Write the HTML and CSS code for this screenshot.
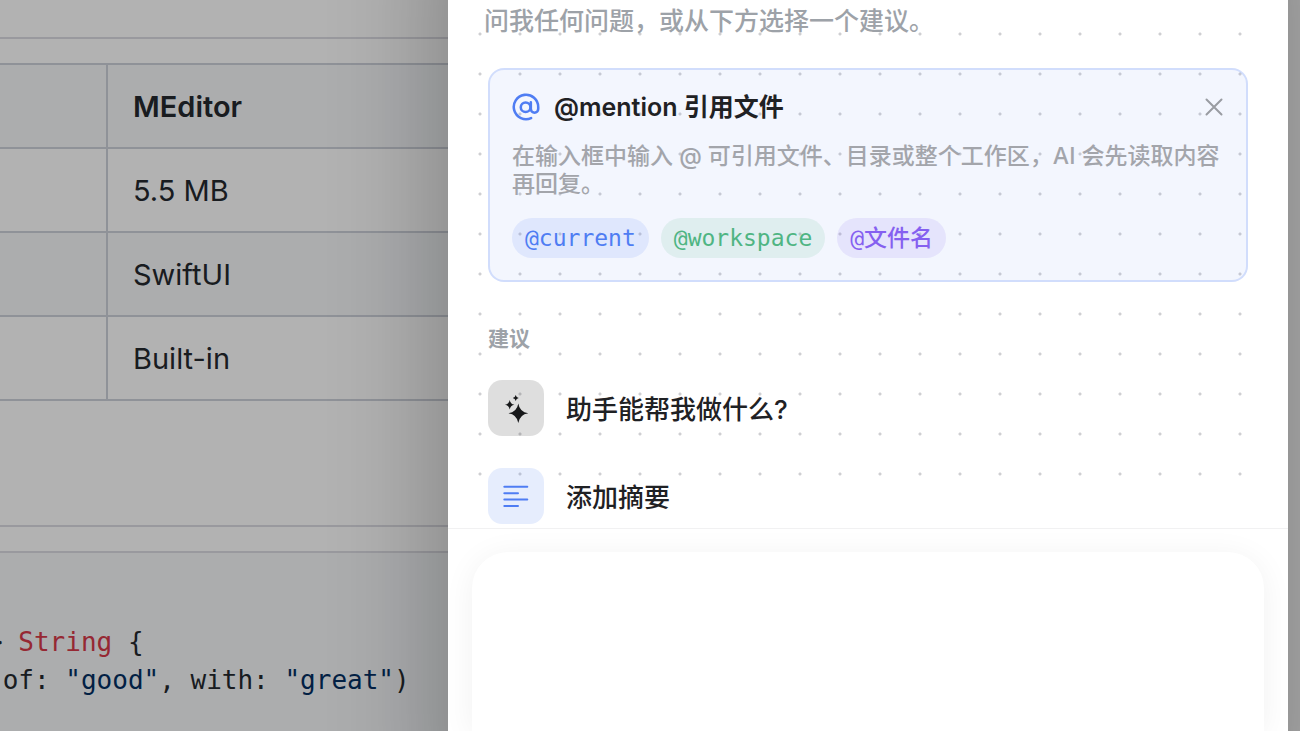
FILE: index.html
```html
<!DOCTYPE html>
<html lang="zh-CN">
<head>
    <meta charset="UTF-8">
    <meta name="viewport" content="width=device-width, initial-scale=1.0">
    <title>MEditor</title>
    <link rel="stylesheet" href="styles.css">
</head>
<body>

    <!-- Document preview -->
    <main class="document">
        <hr>
        <table class="compare">
            <thead>
                <tr><th></th><th>MEditor</th></tr>
            </thead>
            <tbody>
                <tr><td></td><td>5.5 MB</td></tr>
                <tr><td></td><td>SwiftUI</td></tr>
                <tr><td></td><td>Built-in</td></tr>
            </tbody>
        </table>
        <hr class="section-end">
        <pre class="code"><code><span class="line">&gt; <span class="type">String</span> {</span><span class="line"> of: <span class="string">"good"</span>, with: <span class="string">"great"</span>)</span></code></pre>
    </main>

    <div class="backdrop"></div>

    <!-- Assistant drawer -->
    <aside class="panel">
        <div class="conversation">
            <p class="intro">问我任何问题，或从下方选择一个建议。</p>

            <section class="tip">
                <header class="tip-header">
                    <svg class="tip-icon" viewBox="1 1 22 22" aria-hidden="true">
                        <circle cx="11.7" cy="12.2" r="3.8"/>
                        <path d="M15.8 8.2v5.4a2.9 2.9 0 0 0 5.8 0V12a9.6 9.6 0 1 0-5.6 8.7"/>
                    </svg>
                    <h2>@mention 引用文件</h2>
                    <button class="close" type="button" aria-label="关闭">
                        <svg viewBox="0 0 20 20"><path d="M2.5 2.5l15 15M17.5 2.5l-15 15"/></svg>
                    </button>
                </header>
                <p class="tip-text">在输入框中输入 @ 可引用文件、目录或整个工作区，AI 会先读取内容再回复。</p>
                <div class="chips">
                    <span class="chip blue">@current</span>
                    <span class="chip green">@workspace</span>
                    <span class="chip purple">@文件名</span>
                </div>
            </section>

            <h3>建议</h3>
            <div class="suggestions">
                <button class="suggestion" type="button">
                    <svg class="tile dark" viewBox="0 0 56 56" aria-hidden="true">
                        <path d="M30.3 23.5Q31.6 32 40.3 33.3Q31.6 34.6 30.3 43.1Q29 34.6 20.3 33.3Q29 32 30.3 23.5Z"/>
                        <path d="M21.7 20Q22.4 24 26.4 24.7Q22.4 25.4 21.7 29.4Q21 25.4 17 24.7Q21 24 21.7 20Z"/>
                        <path d="M27.7 15Q28.2 17.5 30.7 18Q28.2 18.5 27.7 21Q27.2 18.5 24.7 18Q27.2 17.5 27.7 15Z"/>
                    </svg>
                    <span>助手能帮我做什么?</span>
                </button>
                <button class="suggestion" type="button">
                    <svg class="tile light" viewBox="0 0 56 56" aria-hidden="true">
                        <path d="M16.3 18.8H39.3M16.3 25.2H30M16.3 31.6H39.3M16.3 38H30"/>
                    </svg>
                    <span>添加摘要</span>
                </button>
            </div>
        </div>

        <form class="composer">
            <textarea aria-label="消息"></textarea>
        </form>
    </aside>

</body>
</html>
```

FILE: styles.css
```css
:root {
    --blue: #4f7df3;
    --gray: #9da2a8;
    --text: #1f2124;
    --border: #cdd1da;
    --panel-width: 840px;
    --panel-gap: 12px;
    --sans: Inter, "Noto Sans CJK SC", sans-serif;
    --mono: "DejaVu Sans Mono", "Noto Sans CJK SC", monospace;
}

* { box-sizing: border-box; }

body {
    margin: 0;
    height: 100vh;
    overflow: hidden;
    background-color: #ffffff;
    color: var(--text);
    font-family: var(--sans);
}

h2, h3, p { margin: 0; }

button {
    border: none;
    padding: 0;
    background: none;
    color: inherit;
    font-family: inherit;
    cursor: pointer;
}

/* --- Document --- */
.document {
    display: flex;
    flex-direction: column;
    min-height: 100vh;
    margin: 0 64px 0 -2px;
    padding-top: 37px;
}

hr {
    width: 100%;
    height: 2px;
    margin: 0 0 24px;
    border: none;
    background-color: #dcdce3;
}

.compare {
    width: 100%;
    border-collapse: collapse;
    color: #24292f;
    font-size: 29px;
    line-height: 36px;
}
.compare th, .compare td {
    height: 84px;
    padding: 2px 25px 0;
    border: 2px solid var(--border);
    text-align: left;
}
.compare th { font-weight: 600; }
.compare th:first-child { width: 108px; }
.compare thead tr, .compare tbody tr:nth-child(even) { background-color: #f6f8fa; }

.section-end { margin-top: 124px; }

.code {
    flex: 1;
    margin: 0;
    padding: 70px 0 24px;
    border-top: 2px solid #dcdce3;
    background-color: #f6f8fa;
    color: #24292e;
    font-family: var(--mono);
    font-size: 26px;
    line-height: 38px;
}
/* scrolled sideways inside its block */
.code code {
    display: block;
    margin-left: -11px;
    font-family: inherit;
}
.line { display: block; }
.type { color: #d73a49; }
.string { color: #032f62; }

/* --- Drawer --- */
.backdrop {
    position: fixed;
    inset: 0;
    overflow: hidden;
    background-color: rgba(0, 0, 0, 0.3);
}
/* drawer shadow, taller than the window so it stays even at the corners */
.backdrop::after {
    content: "";
    position: absolute;
    top: -120px;
    right: var(--panel-gap);
    bottom: -120px;
    width: var(--panel-width);
    box-shadow: 0 0 120px rgba(0, 0, 0, 0.32);
}

.panel {
    position: fixed;
    top: 0;
    right: var(--panel-gap);
    bottom: 0;
    display: flex;
    flex-direction: column;
    width: var(--panel-width);
    max-width: 100%;
    overflow: hidden;
    background-color: #ffffff;
}

.conversation {
    margin: 0 20px;
    padding: 0 20px 4px;
    background:
        linear-gradient(#ffffff, #ffffff) bottom / 100% 32px no-repeat,
        radial-gradient(circle, #cfcfd2 1px, transparent 2px) -8px 14px / 40px 40px;
}

.intro {
    margin: 0 0 26px -4px;
    color: var(--gray);
    font-size: 25px;
    font-weight: 500;
    line-height: 42px;
}

/* --- Mention tip --- */
.tip {
    padding: 22px;
    border: 2px solid rgba(79, 125, 243, 0.26);
    border-radius: 16px;
    background-color: rgba(79, 125, 243, 0.07);
    background-clip: padding-box;
}
.tip-header {
    display: flex;
    align-items: center;
    gap: 14px;
    height: 30px;
    margin-bottom: 20px;
}
.tip-header h2 {
    flex: 1;
    font-size: 25px;
    font-weight: 600;
    line-height: 30px;
}
.tip-icon {
    width: 28px;
    height: 28px;
    fill: none;
    stroke: var(--blue);
    stroke-width: 2;
    stroke-linecap: round;
}
.close { display: flex; }
.close svg {
    width: 20px;
    height: 20px;
    fill: none;
    stroke: #999ca2;
    stroke-width: 2;
    stroke-linecap: round;
}
.tip-text {
    margin-bottom: 20px;
    color: #a3a5ab;
    font-size: 23px;
    font-weight: 500;
    line-height: 28px;
}

.chips { display: flex; gap: 12px; }
.chip {
    padding: 0 13px;
    border-radius: 20px;
    font-family: var(--mono);
    font-size: 23px;
    font-weight: 500;
    line-height: 40px;
}
.blue { color: var(--blue); background-color: rgba(79, 125, 243, 0.12); }
.green { color: #4fb583; background-color: rgba(79, 181, 131, 0.12); }
.purple { color: #8560f0; background-color: rgba(133, 96, 240, 0.12); }

/* --- Suggestions --- */
h3 {
    margin: 43px 0 27px;
    color: var(--gray);
    font-size: 21px;
    font-weight: 600;
    line-height: 28px;
}
.suggestions {
    display: flex;
    flex-direction: column;
    gap: 32px;
}
.suggestion {
    display: flex;
    align-items: center;
    gap: 22px;
    font-size: 26px;
    font-weight: 500;
    line-height: 36px;
    text-align: left;
}
.suggestion span { padding-top: 4px; }
.tile {
    width: 56px;
    height: 56px;
    border-radius: 14px;
}
.dark { fill: #17181a; background-color: rgba(0, 0, 0, 0.13); }
.light {
    fill: none;
    stroke: var(--blue);
    stroke-width: 2;
    stroke-linecap: round;
    background-color: rgba(79, 125, 243, 0.14);
}

/* --- Composer --- */
.composer {
    display: flex;
    flex: 1;
    padding: 23px 24px 0;
    border-top: 1px solid #f1f1f2;
    background-color: #ffffff;
}
.composer textarea {
    flex: 1;
    padding: 24px;
    border: none;
    border-radius: 36px 36px 0 0;
    outline: none;
    background-color: #ffffff;
    box-shadow: 0 4px 32px rgba(0, 0, 0, 0.06);
    font-family: inherit;
    font-size: 26px;
    resize: none;
}
```
